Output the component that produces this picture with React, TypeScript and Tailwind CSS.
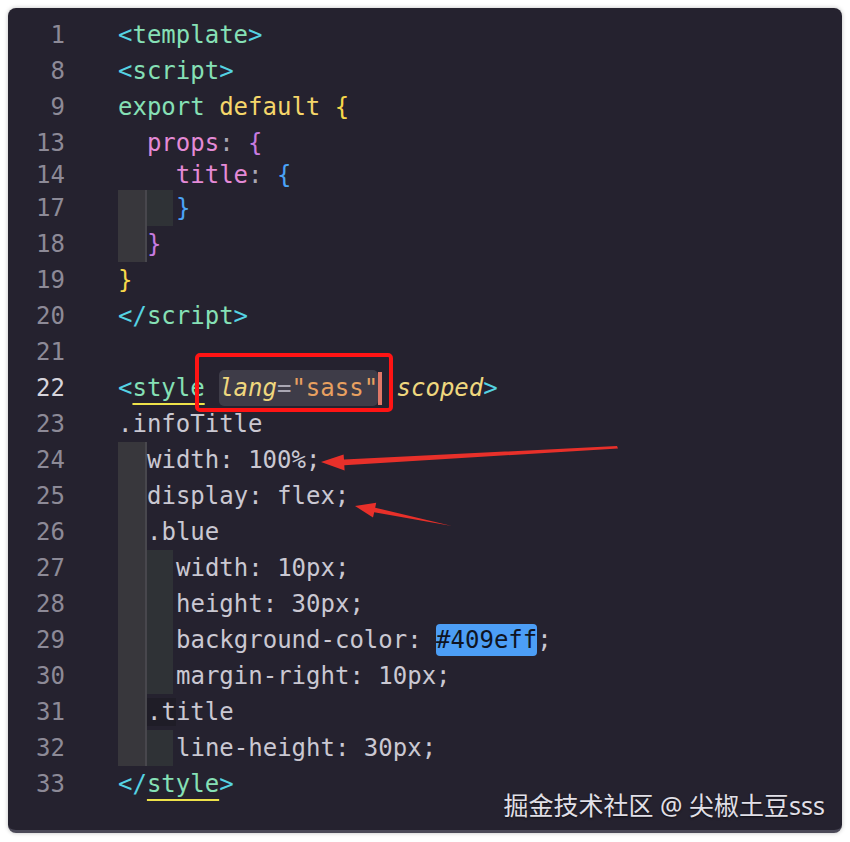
type Tok = [string, string?];

type Row = {
  n: number;
  h: number;
  guides?: ("outer" | "inner")[];
  toks: Tok[];
};

const TB = "text-[#55d3e3]"; // tag bracket
const TN = "text-[#86e0b6]"; // tag name
const TX = "text-[#cac8d2]"; // plain text
const PK = "text-[#e48ad6]"; // pink keys
const YL = "text-[#f5d66a]";

const rows: Row[] = [
  { n: 1, h: 36, toks: [["<", TB], ["template", TN], [">", TB]] },
  { n: 8, h: 36, toks: [["<", TB], ["script", TN], [">", TB]] },
  { n: 9, h: 36, toks: [["export ", TN], ["default ", YL], ["{", "text-[#f7d84a]"]] },
  { n: 13, h: 35, toks: [["  props", PK], [": ", "text-[#a9a7b3]"], ["{", "text-[#c77be0]"]] },
  { n: 14, h: 30, toks: [["    title", PK], [": ", "text-[#a9a7b3]"], ["{", "text-[#4ba3f7]"]] },
  { n: 17, h: 36, guides: ["outer", "inner"], toks: [["}", "text-[#4ba3f7]"]] },
  { n: 18, h: 36, guides: ["outer"], toks: [["}", "text-[#c77be0]"]] },
  { n: 19, h: 36, toks: [["}", "text-[#f7d84a]"]] },
  { n: 20, h: 36, toks: [["</", TB], ["script", TN], [">", TB]] },
  { n: 21, h: 36, toks: [] },
];

const styleRows: Row[] = [
  { n: 23, h: 36, toks: [[".infoTitle", TX]] },
  { n: 24, h: 36, guides: ["outer"], toks: [["width: 100%;", TX]] },
  { n: 25, h: 36, guides: ["outer"], toks: [["display: flex;", TX]] },
  { n: 26, h: 36, guides: ["outer"], toks: [[".blue", TX]] },
  { n: 27, h: 36, guides: ["outer", "inner"], toks: [["width: 10px;", TX]] },
  { n: 28, h: 36, guides: ["outer", "inner"], toks: [["height: 30px;", TX]] },
  { n: 29, h: 36, guides: ["outer", "inner"], toks: [["background-color: ", TX], ["#409eff", "HL"], [";", TX]] },
  { n: 30, h: 36, guides: ["outer", "inner"], toks: [["margin-right: 10px;", TX]] },
  { n: 31, h: 36, guides: ["outer"], toks: [[".title", TX]] },
  { n: 32, h: 36, guides: ["outer", "inner"], toks: [["line-height: 30px;", TX]] },
];

function Num({ n, active }: { n: number; active?: boolean }) {
  return (
    <div className={`w-[57px] shrink-0 text-right ${active ? "text-[#d6d4dc]" : "text-[#8d8a97]"}`}>
      {n}
    </div>
  );
}

function Guides({ guides }: { guides?: ("outer" | "inner")[] }) {
  if (!guides) return null;
  return (
    <>
      {guides.map((g, i) =>
        g === "outer" ? (
          <div key={i} className="w-[29px] shrink-0 border-r-2 border-[#48474d] bg-[#38373c]" />
        ) : (
          <div key={i} className="w-[29px] shrink-0 border-r-[3px] border-[#25222f] bg-[#2f3236]" />
        )
      )}
    </>
  );
}

function Line({ row }: { row: Row }) {
  return (
    <div className="flex items-center" style={{ height: row.h }}>
      <Num n={row.n} />
      <div className="ml-[53px] flex h-full items-stretch">
        <Guides guides={row.guides} />
        <div className="flex items-center whitespace-pre">
          {row.toks.map(([t, c], i) =>
            c === "HL" ? (
              <span key={i} className="rounded-[4px] bg-[#4c9ef6] py-[4px] text-[#0f1422]">
                {t}
              </span>
            ) : row.n === 31 && i === 0 ? (
              <span key={i} className={c}>
                <span className="bg-[#1f1d27]">.t</span>
                {t.slice(2)}
              </span>
            ) : (
              <span key={i} className={c}>
                {t}
              </span>
            )
          )}
        </div>
      </div>
    </div>
  );
}

export default function App() {
  return (
    <div className="relative h-[842px] w-[850px] bg-white pl-[8px] pt-[8px]">
      <div
        className="relative h-[825px] w-[834px] overflow-hidden rounded-[8px] border-b-[3px] border-[#4b4958] bg-[#25222f] pt-[9px] text-[24px] leading-none shadow-[0_0_4px_rgba(0,0,0,0.25)]"
        style={{ fontFamily: '"DejaVu Sans Mono", "Liberation Mono", monospace' }}
      >
        {rows.map((r) => (
          <Line key={r.n} row={r} />
        ))}

        {/* active line 22 */}
        <div className="flex h-[36px] items-center">
          <Num n={22} active />
          <div className="ml-[53px] flex items-center whitespace-pre">
            <span className={TB}>{"<"}</span>
            <span className={`${TN} underline decoration-[#eee24a] decoration-2 underline-offset-[7px]`}>style</span>
            <span> </span>
            <span className="rounded-[5px] bg-[#3e3c48] py-[6px]">
              <span className="italic text-[#efd77e]">lang</span>
              <span className="text-[#a9a7b3]">=</span>
              <span className="text-[#e8a060]">"sass"</span>
            </span>
            <span className="h-[33px] w-[4px] bg-[#e07868]" />
            <span className="italic text-[#efd77e]"> scoped</span>
            <span className={TB}>{">"}</span>
          </div>
        </div>

        {styleRows.map((r) => (
          <Line key={r.n} row={r} />
        ))}

        <div className="flex h-[36px] items-center">
          <Num n={33} />
          <div className="ml-[53px] flex items-center whitespace-pre">
            <span className={TB}>{"</"}</span>
            <span className={`${TN} underline decoration-[#eee24a] decoration-2 underline-offset-[7px]`}>style</span>
            <span className={TB}>{">"}</span>
          </div>
        </div>

        <div
          className="absolute bottom-[12px] right-[17px] text-[25px] leading-none text-[#e2e0e8] [text-shadow:0_1px_2px_rgba(0,0,0,0.6)]"
          style={{ fontFamily: '"Noto Sans", "Noto Sans CJK SC", sans-serif' }}
        >
          掘金技术社区 @ 尖椒土豆sss
        </div>
      </div>

      {/* annotations */}
      <svg className="absolute left-0 top-0" width="850" height="842" viewBox="0 0 850 842">
        <rect x="197" y="355" width="194" height="55" rx="3" fill="none" stroke="#ff1414" strokeWidth="4" />
        <polygon points="617,446 344,459.6 343.6,454.5 321,462 344.6,470.4 344.3,465.2 618,448.5" fill="#e8302a" />
        <polygon points="355,506 376.2,502.8 375.2,507.7 452,526 374.2,512.3 373,517.4" fill="#e8302a" />
      </svg>
    </div>
  );
}
